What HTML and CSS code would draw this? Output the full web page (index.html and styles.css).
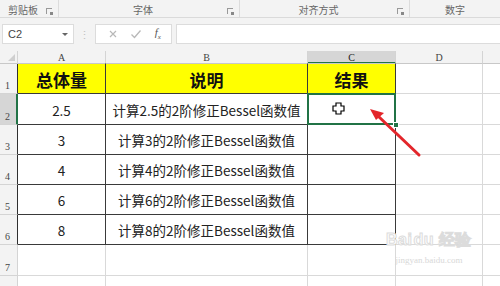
FILE: index.html
```html
<!DOCTYPE html>
<html>
<head>
<meta charset="utf-8">
<link rel="stylesheet" href="styles.css">
</head>
<body>
<div class="ribbon">
  <div class="grp g1"><span class="glabel">剪贴板</span><span class="launch"></span></div>
  <div class="grp g2"><span class="glabel">字体</span><span class="launch"></span></div>
  <div class="grp g3"><span class="glabel">对齐方式</span><span class="launch"></span></div>
  <div class="grp g4"><span class="glabel">数字</span></div>
</div>
<div class="fbar">
  <div class="namebox"><span>C2</span><span class="caret"></span></div>
  <div class="dots">⋮</div>
  <div class="fbtns">
    <svg class="ic" width="10" height="10" viewBox="0 0 10 10"><path d="M2 2L8 8M8 2L2 8" stroke="#b8b8b8" stroke-width="1.2"/></svg>
    <svg class="ic" width="12" height="10" viewBox="0 0 12 10"><path d="M1.5 5.5L4.5 8.5L10.5 1.5" stroke="#b8b8b8" stroke-width="1.3" fill="none"/></svg>
    <span class="fx">f<sub>x</sub></span>
  </div>
  <div class="finput"></div>
</div>
<div class="sheet">
  <div class="corner"><span class="tri"></span></div>
  <div class="ch">A</div>
  <div class="ch">B</div>
  <div class="ch sel">C</div>
  <div class="ch">D</div>
  <div class="ch last"></div>

  <div class="rh r1">1</div>
  <div class="c t hd">总体量</div>
  <div class="c t hd">说明</div>
  <div class="c t hd">结果</div>
  <div class="c"></div>
  <div class="c last"></div>

  <div class="rh r2 rsel">2</div>
  <div class="c t">2.5</div>
  <div class="c t">计算2.5的2阶修正Bessel函数值</div>
  <div class="c t active"><span class="handle"></span></div>
  <div class="c"></div>
  <div class="c last"></div>

  <div class="rh r3">3</div>
  <div class="c t">3</div>
  <div class="c t">计算3的2阶修正Bessel函数值</div>
  <div class="c t"></div>
  <div class="c"></div>
  <div class="c last"></div>

  <div class="rh r4">4</div>
  <div class="c t">4</div>
  <div class="c t">计算4的2阶修正Bessel函数值</div>
  <div class="c t"></div>
  <div class="c"></div>
  <div class="c last"></div>

  <div class="rh r5">5</div>
  <div class="c t">6</div>
  <div class="c t">计算6的2阶修正Bessel函数值</div>
  <div class="c t"></div>
  <div class="c"></div>
  <div class="c last"></div>

  <div class="rh r6">6</div>
  <div class="c t">8</div>
  <div class="c t">计算8的2阶修正Bessel函数值</div>
  <div class="c t"></div>
  <div class="c"></div>
  <div class="c last"></div>

  <div class="rh plain">7</div>
  <div class="c"></div>
  <div class="c"></div>
  <div class="c"></div>
  <div class="c"></div>
  <div class="c last"></div>

  <div class="rh plain"></div>
  <div class="c"></div>
  <div class="c"></div>
  <div class="c"></div>
  <div class="c"></div>
  <div class="c last"></div>

  <svg class="overlay" width="500" height="234" viewBox="0 52 500 234">
    <path d="M336 104h5v3h3v5h-3v3h-5v-3h-3v-5h3z" fill="#fff" stroke="#000" stroke-width="1.2"/>
    <line x1="419" y1="156" x2="378" y2="117" stroke="#e3262b" stroke-width="3" stroke-linecap="round"/>
    <path d="M370 110L384 114L376 121Z" fill="#e3262b"/>
  </svg>
  <div class="wm">
    <div class="wm1">Bai<span class="paw">du</span> 经验</div>
    <div class="wm2">jingyan.baidu.com</div>
  </div>
</div>
</body>
</html>
```
FILE: styles.css
```css
* { box-sizing: border-box; }
html, body { margin: 0; padding: 0; }
body {
  width: 500px;
  height: 286px;
  overflow: hidden;
  background: #fff;
  font-family: "Noto Sans CJK SC", "Noto Sans", sans-serif;
  position: relative;
}
.ribbon {
  height: 18px;
  background: #f3f3f3;
  border-bottom: 1px solid #dadada;
  display: flex;
}
.grp {
  display: flex;
  align-items: center;
  border-right: 1px solid #dcdcdc;
  height: 17px;
}
.g1 { width: 59px; }
.g2 { width: 181px; }
.g3 { width: 170px; }
.g4 { width: 90px; border-right: none; }
.glabel {
  flex: 1;
  text-align: center;
  font-size: 10px;
  color: #666;
  line-height: 12px;
  padding-top: 3px;
}
.launch {
  width: 6px;
  height: 6px;
  border-left: 1px solid #999;
  border-top: 1px solid #999;
  margin: 5px 6px 0 0;
  position: relative;
}
.launch::after {
  content: "";
  position: absolute;
  right: -1px;
  bottom: -1px;
  width: 3px;
  height: 3px;
  background: #888;
}
.fbar {
  height: 33px;
  background: #f3f3f3;
  display: flex;
  align-items: flex-start;
  padding-top: 6px;
}
.namebox {
  margin-left: 2px;
  width: 72px;
  height: 20px;
  background: #fff;
  border: 1px solid #dcdcdc;
  display: flex;
  align-items: center;
  justify-content: space-between;
  padding: 0 5px 0 5px;
  font-family: "Liberation Sans", sans-serif;
  font-size: 11px;
  color: #444;
}
.caret {
  width: 0; height: 0;
  border-left: 3px solid transparent;
  border-right: 3px solid transparent;
  border-top: 3px solid #666;
}
.dots {
  width: 21px;
  text-align: center;
  color: #c0c0c0;
  font-size: 11px;
  line-height: 20px;
}
.fbtns {
  width: 77px;
  height: 20px;
  background: #fff;
  border: 1px solid #dcdcdc;
  display: flex;
  align-items: center;
  justify-content: space-around;
  padding: 0 4px 0 6px;
}
.fx {
  font-family: "Liberation Serif", serif;
  font-style: italic;
  font-size: 11px;
  color: #555;
}
.fx sub { font-size: 7px; }
.finput {
  flex: 1;
  margin-left: 4px;
  height: 20px;
  background: #fff;
  border: 1px solid #dcdcdc;
  border-right: none;
}
.sheet {
  display: grid;
  grid-template-columns: 18px 88px 202px 88px 87px 17px;
  grid-template-rows: 13px 30px 31px 30px 30px 30px 30px 31px 30px;
  position: relative;
}
.corner {
  background: #f3f3f3;
  border-right: 1px solid #d4d4d4;
  border-bottom: 1px solid #c8c8c8;
  position: relative;
}
.tri {
  position: absolute;
  right: 2px;
  bottom: 2px;
  width: 0; height: 0;
  border-left: 7px solid transparent;
  border-bottom: 7px solid #cfcfcf;
}
.ch {
  background: #f3f3f3;
  border-right: 1px solid #d4d4d4;
  border-bottom: 1px solid #c8c8c8;
  font-family: "Liberation Serif", serif;
  font-size: 10px;
  color: #444;
  text-align: center;
  line-height: 13px;
}
.ch.sel {
  background: #d6d6d6;
  border-bottom: 2px solid #217346;
  color: #222;
}
.ch.last, .c.last { border-right: none; }
.rh {
  background: #f3f3f3;
  border-right: 1px solid #2f2f2f;
  border-bottom: 1px solid #d4d4d4;
  font-family: "Liberation Serif", serif;
  font-size: 10px;
  color: #444;
  display: flex;
  align-items: flex-end;
  padding: 0 0 2px 5px;
}
.rh.plain { border-right: 1px solid #d4d4d4; }
.rh.rsel {
  background: #d6d6d6;
  border-right: 2px solid #217346;
}
.c {
  border-right: 1px solid #d9d9d9;
  border-bottom: 1px solid #d9d9d9;
}
.c.t {
  border-right: 1px solid #3a3a3a;
  border-bottom: 1px solid #3a3a3a;
  display: flex;
  align-items: center;
  justify-content: center;
  font-size: 13.5px;
  color: #222;
  padding-top: 1px;
}
.c.hd {
  background: #ffff00;
  font-weight: bold;
  font-size: 17px;
  color: #111;
  border-top: 1px solid #c8c8c8;
  margin-top: -1px;
}
.c.active {
  position: relative;
}
.c.active::before {
  content: "";
  position: absolute;
  left: -1px;
  top: -1px;
  right: -1px;
  bottom: -1px;
  border: 2px solid #217346;
}
.handle {
  position: absolute;
  right: -4px;
  bottom: -4px;
  width: 6px;
  height: 6px;
  background: #217346;
  border: 1px solid #fff;
}
.overlay {
  position: absolute;
  left: 0;
  top: 0;
  pointer-events: none;
}
.wm {
  position: absolute;
  left: 386px;
  top: 181px;
  font-family: "Liberation Sans", sans-serif;
  text-align: center;
  line-height: 1;
}
.wm1 {
  font-size: 16px;
  font-weight: bold;
  color: #fff;
  -webkit-text-stroke: 1px #dcdcdc;
  letter-spacing: 0.5px;
}
.paw { margin-left: 1px; }
.wm2 {
  font-family: "Liberation Serif", serif;
  font-size: 9px;
  margin-top: 8px;
  color: #d8d8d8;
}
```
